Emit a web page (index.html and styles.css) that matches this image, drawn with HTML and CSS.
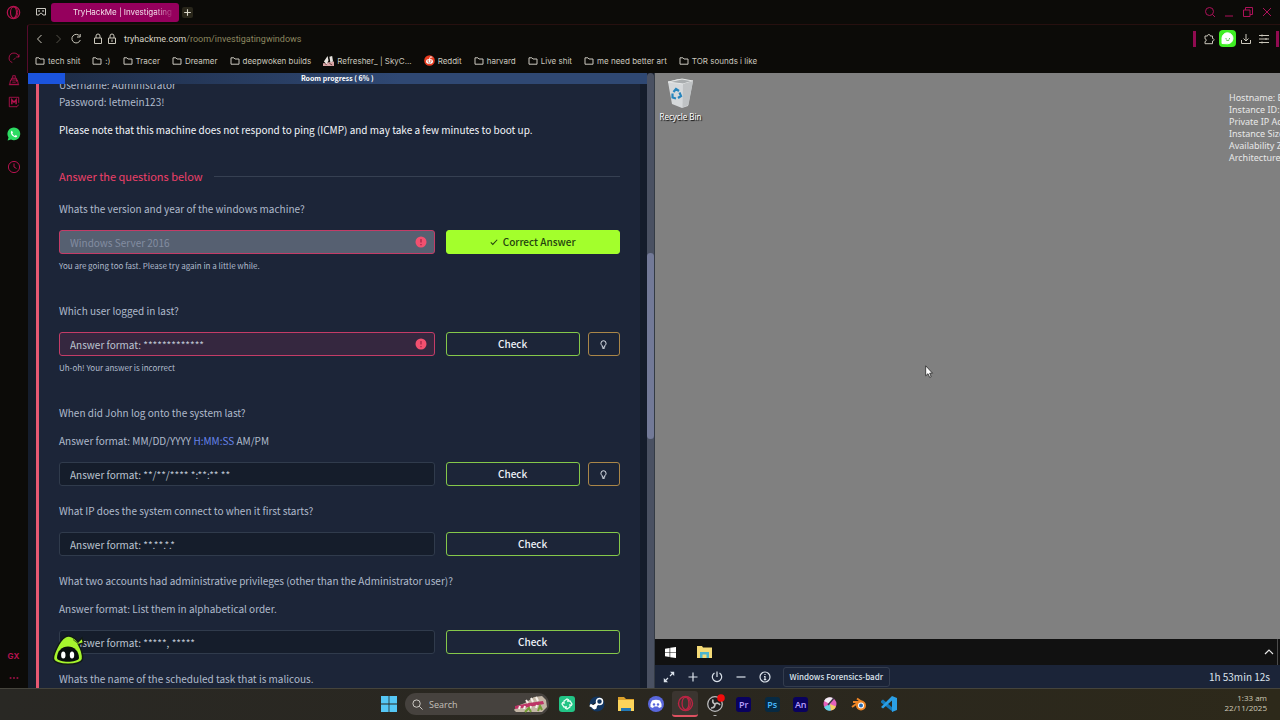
FILE: index.html
```
<!DOCTYPE html>
<html lang="en">
<head>
<meta charset="utf-8">
<title>TryHackMe | Investigating Windows</title>
<link rel="stylesheet" href="styles.css">
</head>
<body>
<svg class="defs" aria-hidden="true">
  <symbol id="folder" viewBox="0 0 10 10"><path d="M1 8.2V1.8h2.9L5 3h4v5.2z" fill="none" stroke="currentColor" stroke-linejoin="round"/></symbol>
  <symbol id="opera" viewBox="0 0 16 16"><circle cx="8" cy="8" r="6.6" fill="none" stroke="currentColor" stroke-width="1.3"/><ellipse cx="8" cy="8" rx="3.2" ry="5.8" fill="none" stroke="currentColor" stroke-width="1.2"/><path d="M9.5 2.3c4 2 4 9.400 0 11.400" fill="none" stroke="currentColor"/></symbol>
  <symbol id="alert" viewBox="0 0 12 12"><circle cx="6" cy="6" r="5.500" fill="#f2506f"/><path d="M6 3v3.600M6 8v1.200" stroke="#a32447" stroke-width="1.300"/></symbol>
  <symbol id="bulb" viewBox="0 0 12 12"><path d="M4.700 9V7.500C3.800 6.700 3.200 5.900 3.200 4.700a2.800 2.800 0 0 1 5.600 0c0 1.200-.6 2-1.500 2.800V9zM4.800 10.200h2.400" fill="none" stroke="currentColor"/></symbol>
</svg>
<div class="screen">
  <div class="browser">
    <nav class="side" aria-label="Browser sidebar">
      <svg class="s-opera" viewBox="0 0 16 16"><use href="#opera"/></svg>
      <div class="side-group">
        <svg viewBox="0 0 14 14"><path d="M5 12.300A5.700 5.700 0 1 1 12.600 6M9.500 5.800h3.300V2.700M6.500 9.200 9 6.600"/></svg>
        <svg viewBox="0 0 14 14"><path d="M4 7V5h6v4M5.500 5V2h3v3M3 7h8l1 5H2l1-5zM1 12.500h12M5 9.500h4"/></svg>
        <svg viewBox="0 0 14 14"><path d="M12.500 8V1.500h-11v11h9M10 12.500l2.500-2"/><path d="M4.500 9.500v-5L7 7.300l2.500-2.800v5" stroke-width="1.700"/></svg>
      </div>
      <svg class="s-whats" viewBox="0 0 14 14"><path d="M.6 13.400 1.500 10.400A6.400 6.400 0 1 1 4 12.600z" fill="#2ddc63"/><path d="M4.900 3.800 6 5.600l-.7 1C6 7.900 6.700 8.500 7.700 9l1-.9 1.600 1c-.4 1.400-1.600 1.500-2.700 1C5.600 9.300 4.300 7.700 3.900 6c-.1-1 .3-1.900 1-2.200z" fill="#fff"/></svg>
      <svg class="s-clock" viewBox="0 0 14 14"><circle cx="7" cy="7" r="5.600"/><path d="M7 3.500V7l2.500 1.500"/></svg>
      <div class="side-end"><span>GX</span><svg viewBox="0 0 14 6"><path d="M2 3h2M6 3h2M10 3h2" stroke-width="2"/></svg></div>
    </nav>
    <div class="window">
      <header class="tabs">
        <svg class="gamepad" viewBox="0 0 12 10"><path d="M1.500 1.500h9v6.500H8L6.800 6.300H5.200L4 8H1.500z" fill="none" stroke="currentColor"/><path d="M3.300 4h1.500M7.300 4h1.500" stroke="currentColor" stroke-width="1.300"/></svg>
        <button class="tab"><span>TryHackMe | Investigating</span></button>
        <button class="plus" aria-label="New tab"><svg viewBox="0 0 10 10"><path d="M5 2v6M2 5h6" stroke="currentColor"/></svg></button>
        <div class="wincontrols">
          <button aria-label="Search tabs"><svg viewBox="0 0 12 12"><circle cx="5.500" cy="5.500" r="4"/><path d="m8.500 8.500 2.500 2.500"/></svg></button>
          <button aria-label="Minimise"><svg viewBox="0 0 12 12"><path d="M2 10h8"/></svg></button>
          <button aria-label="Restore"><svg viewBox="0 0 12 12"><path d="M1.500 4h6.500v6.500H1.500zM3.500 4V1.500h7V8.500H8"/></svg></button>
          <button aria-label="Close"><svg viewBox="0 0 12 12"><path d="m2 2 8 8M10 2l-8 8"/></svg></button>
        </div>
      </header>
      <div class="chrome">
        <div class="address">
          <svg viewBox="0 0 12 12"><path d="M7.500 2 3.500 6l4 4"/></svg>
          <svg class="dim" viewBox="0 0 12 12"><path d="m4.500 2 4 4-4 4"/></svg>
          <svg viewBox="0 0 12 12"><path d="M9.600 3A4.300 4.300 0 1 0 10.300 7M10.200 1v3H7"/></svg>
          <svg class="lock" viewBox="0 0 12 12"><path d="M2.500 5h7v5.500h-7zM4 5V3a2 2 0 0 1 4 0v2"/></svg>
          <svg viewBox="0 0 12 12"><path d="M2.500 5h7v5.500h-7zM4 5V3a2 2 0 0 1 4 0v2M6 6.500v2.500"/></svg>
          <span class="url">tryhackme.com<em>/room/investigatingwindows</em></span>
          <div class="tools">
            <i></i>
            <svg viewBox="0 0 12 12"><path d="M2 3h2.500c-.3-2 3-2 2.700 0H9.500v2.500c2-.2 2 2.700 0 2.500v2.700H2V8.500c1.700 0 1.700-2.700 0-2.700z"/></svg>
            <svg class="chat" viewBox="0 0 17 17"><rect width="17" height="17" rx="4" fill="#3fee23" stroke="none"/><path d="M3 13.500V8a5.500 5.500 0 1 1 5.500 5.800z" fill="#fff" stroke="#fff"/><path d="M7 8.200v1M10.500 8.200v1M7.200 10q1.500 1 3 0" stroke="#3fb92f"/></svg>
            <svg viewBox="0 0 12 12"><path d="M6 1v7M3.500 5.500 6 8l2.500-2.500M1.500 7v3.500h9V7"/></svg>
            <svg class="menu" viewBox="0 0 12 12"><path d="M1 2.500h10M1 6h10M1 9.500h10M4 1.500v2M8 5v2M4 8.500v2"/></svg>
            <i></i>
          </div>
        </div>
        <nav class="bookmarks">
          <a href="#"><svg><use href="#folder"/></svg>tech shit</a>
          <a href="#"><svg><use href="#folder"/></svg>:)</a>
          <a href="#"><svg><use href="#folder"/></svg>Tracer</a>
          <a href="#"><svg><use href="#folder"/></svg>Dreamer</a>
          <a href="#"><svg><use href="#folder"/></svg>deepwoken builds</a>
          <a href="#"><svg class="fav" viewBox="0 0 12 12"><path d="M0 9 12 7v5H0z" fill="#d9a6a6"/><path d="m1 7 4-6 1 5-2 4zM7 2l3-1 1 6-3 1z" fill="#e8e4df"/><path d="m2 9 2 2M7 9l3 2" stroke="#5c3436"/></svg>Refresher_ | SkyC...</a>
          <a href="#"><svg class="fav" viewBox="0 0 12 12"><circle cx="6" cy="6" r="5.800" fill="#e93c20"/><ellipse cx="6" cy="7" rx="3.800" ry="2.700" fill="#fff"/><path d="M6 4.300 7 2l2 .5" stroke="#fff" fill="none"/><circle cx="4.500" cy="6.500" r=".8" fill="#e93c20"/><circle cx="7.500" cy="6.500" r=".8" fill="#e93c20"/><path d="M4.500 8.300q1.500 1 3 0" stroke="#59211a" fill="none" stroke-width=".6"/></svg>Reddit</a>
          <a href="#"><svg><use href="#folder"/></svg>harvard</a>
          <a href="#"><svg><use href="#folder"/></svg>Live shit</a>
          <a href="#"><svg><use href="#folder"/></svg>me need better art</a>
          <a href="#"><svg><use href="#folder"/></svg>TOR sounds i like</a>
        </nav>
      </div>
      <main class="split">
        <section class="room">
          <div class="scroller">
            <article class="task">
              <p class="creds">Username: Administrator<br>Password: letmein123!</p>
              <p class="note">Please note that this machine does not respond to ping (ICMP) and may take a few minutes to boot up.</p>
              <h2>Answer the questions below</h2>
              <form>
                <div class="question">
                  <label for="q1">Whats the version and year of the windows machine?</label>
                  <div class="answer">
                    <div class="field"><input id="q1" class="error" value="Windows Server 2016" disabled><svg><use href="#alert"/></svg></div>
                    <div class="actions"><button type="button" class="correct"><svg viewBox="0 0 10 10"><path d="m1 5.500 2.500 2.500L9 2.200" fill="none" stroke="currentColor" stroke-width="1.300"/></svg>Correct Answer</button></div>
                  </div>
                  <small>You are going too fast. Please try again in a little while.</small>
                </div>
                <div class="question">
                  <label for="q2">Which user logged in last?</label>
                  <div class="answer">
                    <div class="field"><input id="q2" class="error" placeholder="Answer format: *************"><svg><use href="#alert"/></svg></div>
                    <div class="actions"><button type="button">Check</button><button type="button" class="hint" aria-label="Hint"><svg><use href="#bulb"/></svg></button></div>
                  </div>
                  <small>Uh-oh! Your answer is incorrect</small>
                </div>
                <div class="question">
                  <label for="q3">When did John log onto the system last?</label>
                  <p>Answer format: MM/DD/YYYY <b>H:MM:SS</b> AM/PM</p>
                  <div class="answer">
                    <div class="field"><input id="q3" placeholder="Answer format: **/**/**** *:**:** **"></div>
                    <div class="actions"><button type="button">Check</button><button type="button" class="hint" aria-label="Hint"><svg><use href="#bulb"/></svg></button></div>
                  </div>
                </div>
                <div class="question">
                  <label for="q4">What IP does the system connect to when it first starts?</label>
                  <div class="answer">
                    <div class="field"><input id="q4" placeholder="Answer format: **.**.*.*"></div>
                    <div class="actions"><button type="button">Check</button></div>
                  </div>
                </div>
                <div class="question">
                  <label for="q5">What two accounts had administrative privileges (other than the Administrator user)?</label>
                  <p>Answer format: List them in alphabetical order.</p>
                  <div class="answer">
                    <div class="field"><input id="q5" placeholder="Answer format: *****, *****"></div>
                    <div class="actions"><button type="button">Check</button></div>
                  </div>
                </div>
                <div class="question"><p>Whats the name of the scheduled task that is malicous.</p></div>
              </form>
            </article>
          </div>
          <div class="progress"><i style="width:6%"></i><strong>Room progress ( 6% )</strong></div>
          <div class="scrollbar"><i></i></div>
          <svg class="mascot" viewBox="0 0 32 30"><path d="M1.500 24C1 20 7 6 13 2.200 17-.5 23 2 26 7l4-4 1 3 .5 2-5 1.500C29 14 31 20 30.500 24 29 31 3 31 1.500 24z" fill="#a6f52d" stroke="#121b16" stroke-width="1.500"/><path d="M21 4.500 26.500 9" stroke="#48721d"/><path d="M5 23c0-7 5-11.500 11-11.500S27 16 27 23c-1 5-21 5-22 0z" fill="#080d0c"/><ellipse cx="11.300" cy="20" rx="2.200" ry="3.500" fill="#fff"/><ellipse cx="20" cy="20" rx="2.200" ry="3.500" fill="#fff"/></svg>
        </section>
        <section class="remote">
          <div class="vmdesk">
            <div class="bin">
              <svg viewBox="0 0 28 30"><path d="m1 4 10-3 15 2-5 25-6 2-10-4z" fill="#d5d8da"/><path d="m1 4 15 2 10-3-11-2z" fill="#a9adaf" stroke="#e5e7e7"/><path d="m16 6 10-3-4.500 24-6 2.500z" fill="#bfc2c4"/><path d="m6.500 14 2.500-3 3 2M12.500 14.500l1.500 3.500-3 2M9 20.500l-3.500-1V15.500" fill="none" stroke="#2785bd" stroke-width="2.200"/></svg>
              <span>Recycle Bin</span>
            </div>
            <div class="instance">Hostname: E<br>Instance ID:<br>Private IP Ac<br>Instance Size<br>Availability Z<br>Architecture</div>
            <svg class="cursor" viewBox="0 0 8 13"><path d="M.7.800v10L3 8.700 4.700 12.400l1.500-.7-1.500-3.500h2.800z" fill="#fff" stroke="#222" stroke-width=".8"/></svg>
          </div>
          <div class="vmbar">
            <svg viewBox="0 0 12 12"><path d="m0 1.800 5-.8v4.700H0zM5.700.900 12 0v5.700H5.700zM0 6.400h5V11l-5-.8zM5.700 6.400H12V12l-6.300-.9z" fill="#fff"/></svg>
            <svg class="vmfolder" viewBox="0 0 15 12"><path d="M0 0h5l1 1.500h9V12H0z" fill="#f4da77"/><path d="M3 12V6h9v6H9.500V8.500h-4V12z" fill="#4db5cf"/></svg>
            <svg class="chev" viewBox="0 0 10 10"><path d="m1 7 4-4 4 4" fill="none" stroke="#e8e8e8" stroke-width="1.200"/></svg>
            <i></i>
          </div>
          <div class="controls">
            <button aria-label="Expand"><svg viewBox="0 0 12 12"><path d="M7 5 10 2M5 7l-3 3"/><path d="M7 .8h4.200V5zM.8 7v4.200H5z" fill="currentColor" stroke="none"/></svg></button>
            <button aria-label="Add time"><svg viewBox="0 0 12 12"><path d="M6 1.500v9M1.500 6h9"/></svg></button>
            <button aria-label="Terminate"><svg viewBox="0 0 12 12"><path d="M6 .5V6M3.500 1.900a4.700 4.700 0 1 0 5 0"/></svg></button>
            <button aria-label="Hide"><svg viewBox="0 0 12 12"><path d="M1.500 6h9"/></svg></button>
            <button aria-label="Information"><svg viewBox="0 0 12 12"><circle cx="6" cy="6" r="5"/><path d="M6 3v1M5 5.500h1v3M4.800 8.700h2.500"/></svg></button>
            <span class="machine">Windows Forensics-badr</span>
            <time>1h 53min 12s</time>
          </div>
        </section>
      </main>
    </div>
  </div>
  <footer class="taskbar">
    <div class="dock">
      <svg class="start" viewBox="0 0 16 16"><path d="M0 0h7.600v7.600H0zM8.400 0H16v7.600H8.400zM0 8.400h7.600V16H0zM8.400 8.400H16V16H8.400z" fill="#55c7f5"/></svg>
      <label class="search"><svg viewBox="0 0 12 12"><circle cx="5" cy="5" r="4"/><path d="m8 8 3.500 3.500"/></svg><input placeholder="Search" aria-label="Search"><svg class="croc" viewBox="0 0 34 18"><path d="M1 15 4 11l8-3 9-6 8-1 4 4 1 7-5 5H3z" fill="#c3b6a5"/><path d="m2 11 14-3 14-2 1 3-15 3-14 2z" fill="#bd3467"/><path d="m13 5 2 3M18 3l2 4M23 2l2 4M6 14l1-3M11 14l1-3M17 14l1-3M23 13l1-3" stroke="#f6f1ea" stroke-width="2"/><path d="m12 17 4-4 2 4M25 16l2-5 2 4" stroke="#729b35" stroke-width="2" fill="none"/></svg></label>
      <div class="apps">
        <svg viewBox="0 0 20 20"><rect x="2" y="2" width="16" height="16" rx="3" fill="#22c486"/><path d="M7 10V7l3-2 2 1M10 7h3l2 3-1 2M13 10v3l-3 2-2-1M10 13H7l-2-3 1-2" fill="none" stroke="#eafff5" stroke-width="1.300"/></svg>
        <svg viewBox="0 0 20 20"><circle cx="10" cy="10" r="7.500" fill="#12355f"/><path d="m3 11 4 2 5-5" stroke="#fff" stroke-width="3"/><circle cx="12.500" cy="7.500" r="3" fill="#12355f" stroke="#fff" stroke-width="1.500"/><circle cx="7.500" cy="13" r="2.400" fill="#fff"/></svg>
        <svg viewBox="0 0 20 20"><path d="M2 3h6l2 2h8v12H2z" fill="#dca12b"/><path d="M2 6h16v11H2z" fill="#fbd45b"/><path d="M5 17v-3h10v3z" fill="#2178b5"/></svg>
        <svg viewBox="0 0 20 20"><circle cx="10" cy="10" r="8" fill="#5967dc"/><path d="M6 6.500q4-1.500 8 0 2 3 1.500 6.500L13 14l-1-1.500H8L7 14l-2.500-1Q4 9.500 6 6.500z" fill="#fff"/><circle cx="8" cy="10.500" r="1.200" fill="#5967dc"/><circle cx="12" cy="10.500" r="1.200" fill="#5967dc"/></svg>
        <span class="active"><svg viewBox="0 0 16 16"><use href="#opera"/></svg></span>
        <svg viewBox="0 0 20 20"><circle cx="10" cy="10" r="7.300" fill="#201f20" stroke="#bbb" stroke-width="1.300"/><path d="M10 10q-3-1-2-4.500M10 10q3-2 5 1M10 10q0 4-4 4" fill="none" stroke="#bbb" stroke-width="1.700"/><circle cx="16" cy="4" r="3.800" fill="#f30c0c"/><path d="M8.500 21.500h3" stroke="#aaa"/></svg>
        <span class="adobe pr">Pr</span>
        <span class="adobe ps">Ps</span>
        <span class="adobe an">An</span>
        <svg viewBox="0 0 20 20"><circle cx="10" cy="10" r="6.500" fill="#e561bc"/><path d="M10 10 4 7a6.500 6.500 0 0 1 9-3z" fill="#f3edf6"/><path d="M10 10 4 13a6.500 6.500 0 0 0 7 3.500z" fill="#63d6e9"/><path d="m10 10 1 6.500a6.500 6.500 0 0 0 5-4z" fill="#f3cf64"/><path d="m8 11 6-7" stroke="#3c3548" stroke-width="1.500"/></svg>
        <svg viewBox="0 0 20 20"><path d="m3 13 7-5H4M8 4.500l7 5" fill="none" stroke="#ee8526" stroke-width="2"/><circle cx="12" cy="11.500" r="4" fill="#fff" stroke="#ee8526" stroke-width="2"/><circle cx="12" cy="11.500" r="2" fill="#2a69ad"/></svg>
        <svg viewBox="0 0 20 20"><path d="m2 7 2-1.500L14 14v4L2 8.500z" fill="#1478b9"/><path d="M2 13 13 2l5 2v12l-5 2V6.500L4 14.500z" fill="#2b9fe5"/></svg>
      </div>
    </div>
    <div class="clock">1:33 am<br>22/11/2025</div>
  </footer>
</div>
</body>
</html>
```
FILE: styles.css
```
* { box-sizing: border-box; }
body { margin: 0; background: #0c0b08; font-family: Inter, sans-serif; }
svg { display: block; flex: none; overflow: visible; }
button { margin: 0; padding: 0; border: 0; background: none; color: inherit; font: inherit; }
p, h2 { margin: 0; }
.defs { position: absolute; width: 0; height: 0; }
.screen { display: flex; flex-direction: column; height: 100vh; overflow: hidden; }
.browser { flex: 1; min-height: 0; display: flex; }

.side { width: 27px; display: flex; flex-direction: column; align-items: center; color: #b5124f; padding-top: 5px; }
.side svg { width: 12px; height: 12px; fill: none; stroke: currentColor; }
.side .s-opera { width: 15px; height: 15px; }
.side-group { display: grid; gap: 10px; margin-top: 32px; }
.side .s-whats { width: 14px; height: 14px; margin-top: 19px; stroke: none; }
.side .s-clock { width: 14px; height: 14px; margin-top: 19px; }
.side-end { margin-top: auto; display: grid; justify-items: center; gap: 13px; padding-bottom: 7px; font-size: 8px; font-weight: 700; line-height: 12px; }
.side-end svg { height: 6px; }

.window { flex: 1; min-width: 0; display: flex; flex-direction: column; }
.tabs { height: 24px; display: flex; align-items: center; padding: 0 7px 0 8px; }
.gamepad { width: 12px; height: 10px; color: #c9c7c0; }
.tab { width: 128px; height: 19px; margin-left: 4px; padding: 0 4px 0 22px; border-radius: 3px; background: #95005d; color: #f3dfea; font-size: 8px; text-align: left; }
.tab span { display: block; white-space: nowrap; mask-image: linear-gradient(90deg, #000 80%, transparent); }
.plus { width: 11px; height: 11px; margin-left: 3px; border-radius: 2px; background: #29261a; color: #dcd9cc; }
.plus svg { width: 11px; height: 11px; }
.wincontrols { display: flex; gap: 7px; margin-left: auto; color: #ad1159; }
.wincontrols svg { width: 12px; height: 12px; fill: none; stroke: currentColor; }

.chrome { border-left: 1px solid #560b2c; border-top: 1px solid #27100f; border-top-left-radius: 3px; height: 49px; }
.address { display: flex; align-items: center; height: 27px; padding: 0 1px 0 6px; gap: 6px; color: #cac7bb; }
.address svg { width: 12px; height: 12px; fill: none; stroke: currentColor; }
.address .dim { color: #55524a; }
.address .lock { margin-left: 4px; margin-right: -4px; }
.url { font: 9px Roboto, sans-serif; color: #d7d4c5; }
.url em { color: #8d8861; font-style: normal; }
.tools { display: flex; align-items: center; gap: 4px; margin-left: auto; }
.tools i { width: 3px; height: 16px; background: #910b51; }
.tools i:first-child { margin-right: 3px; }
.tools .chat { width: 17px; height: 17px; }
.tools .menu { margin: 0 2px; }
.bookmarks { display: flex; gap: 12px; height: 17px; padding-left: 7px; align-items: center; white-space: nowrap; }
.bookmarks a { display: flex; align-items: center; gap: 3px; color: #cbc8bf; font-size: 8px; line-height: 16px; text-decoration: none; }
.bookmarks svg { width: 10px; height: 10px; }
.bookmarks .fav { width: 11px; height: 11px; }

.split { flex: 1; min-height: 0; display: flex; font-family: "Noto Sans CJK SC", sans-serif; margin-left: 1px; }
.room { flex: 1; min-width: 0; position: relative; display: flex; background: #151d2c; }
.scroller { flex: 1; min-width: 0; overflow: hidden; padding: 0 7px 0 8px; }
.task { border-left: 3px solid #e75872; background: #1c2538; padding: 3px 20px 0 20px; min-height: 100%; color: #b0bbcc; font-size: 10px; }
.creds { line-height: 17px; }
.note { margin-top: 11px; line-height: 17px; color: #f3f6fa; }
.task h2 { display: flex; align-items: center; gap: 11px; margin: 28px 0 14px; color: #ed4069; font-size: 11px; font-weight: 400; line-height: 20px; }
.task h2::after { content: ""; flex: 1; height: 1px; background: #364052; }
.question { display: flex; flex-direction: column; margin-bottom: 16px; line-height: 18px; }
.question p { margin-top: 10px; }
.question > p:first-child { margin-top: 0; }
.question b { font-weight: 400; color: #6684eb; }
.answer { display: grid; grid-template-columns: minmax(0, 1fr) 31%; gap: 11px; margin-top: 12px; }
.field { position: relative; }
.field input { display: block; width: 100%; height: 24px; padding: 0 10px; border: 1px solid #303b4c; border-radius: 3px; background: #151d2b; color: #b0bbcc; font: inherit; outline: 0; }
.field input::placeholder { color: #bdc5d1; opacity: 1; }
.field .error { border-color: #c43c67; background: #35273f; }
.field input:disabled { background: #566071; color: #838da1; }
.field svg { position: absolute; right: 8px; top: 6px; width: 12px; height: 12px; }
.actions { display: flex; gap: 8px; }
.actions button { flex: 1; height: 24px; border: 1px solid #85c84a; border-radius: 3px; color: #eef2f8; font-weight: 500; font-size: 10px; display: flex; align-items: center; justify-content: center; }
.actions .correct { border-color: #a3ff2c; background: #a3ff2c; color: #24430f; gap: 5px; }
.correct svg { width: 8px; height: 8px; }
.actions .hint { flex: 0 0 32px; border-color: #aa8648; }
.hint svg { width: 11px; height: 11px; }
.question small { margin: 4px 0 12px; font-size: 8px; line-height: 16px; color: #b0bbcc; }
.progress { position: absolute; inset: 0 7px auto 0; height: 11px; background: linear-gradient(90deg, #1c2a43, #2f4873 60%); text-align: center; }
.progress i { position: absolute; left: 0; top: 0; height: 11px; background: #1b54dd; }
.progress strong { position: relative; display: block; color: #fff; font-size: 7px; font-weight: 700; line-height: 11px; }
.scrollbar { width: 7px; padding-top: 180px; background: #4a5162; border-radius: 4px 4px 0 0; }
.scrollbar i { display: block; height: 186px; background: #737a98; border-radius: 4px; }
.mascot { position: absolute; left: 24px; bottom: 23px; width: 32px; height: 30px; }

.remote { flex: 1; min-width: 0; display: flex; flex-direction: column; border-left: 1px solid #343b45; }
.vmdesk { position: relative; flex: 1; overflow: hidden; background: #808080; }
.bin { position: absolute; left: 2px; top: 5px; width: 48px; display: grid; justify-items: center; gap: 3px; color: #fff; font: 8px/12px "Noto Sans", sans-serif; text-shadow: 1px 1px 1px #000; white-space: nowrap; }
.bin svg { width: 28px; height: 30px; }
.instance { position: absolute; left: calc(100% - 51px); top: 19px; color: #e8e8e8; font: 9px/12px "Noto Sans", sans-serif; white-space: nowrap; }
.cursor { position: absolute; left: 270px; top: 292px; width: 8px; height: 13px; }
.vmbar { height: 26px; display: flex; align-items: center; padding-left: 10px; background: #111; }
.vmbar svg { width: 11px; height: 11px; }
.vmbar .vmfolder { width: 15px; height: 12px; margin-left: 21px; }
.vmbar .chev { width: 10px; height: 10px; margin-left: auto; margin-right: 3px; }
.vmbar i { width: 3px; height: 26px; border-left: 1px solid #4c4c4c; }
.controls { height: 23px; display: flex; align-items: center; gap: 12px; padding: 0 10px 0 8px; background: #1b2438; color: #dce3ec; }
.controls svg { width: 12px; height: 12px; fill: none; stroke: currentColor; stroke-width: 1.200; }
.machine { height: 20px; padding: 0 6px; border: 1px solid #333c4e; border-radius: 3px; font-size: 8px; line-height: 18px; font-weight: 500; white-space: nowrap; }
.controls time { margin-left: auto; font-size: 10px; }

.taskbar { position: relative; height: 32px; display: flex; align-items: center; justify-content: center; padding-bottom: 1px; border-top: 1px solid #45443c; background: linear-gradient(90deg, #292824, #2a271f 55%, #2d291a); }
.dock { display: flex; align-items: center; gap: 8px; }
.start { width: 16px; height: 16px; }
.search { width: 144px; height: 22px; display: flex; align-items: center; gap: 6px; padding: 0 2px 0 7px; border-radius: 11px; background: #46423e; color: #d8d5d0; }
.search svg { width: 11px; height: 11px; fill: none; stroke: currentColor; }
.search input { flex: 1; min-width: 0; padding: 0; border: 0; background: none; color: inherit; font: 9px "Open Sans", sans-serif; outline: 0; }
.search input::placeholder { color: #c4c0ba; opacity: 1; }
.search .croc { width: 34px; height: 18px; stroke: none; }
.apps { width: 342px; display: flex; justify-content: space-between; align-items: center; }
.apps > * { width: 20px; height: 20px; }
.apps > .active { display: grid; place-items: center; width: 26px; height: 26px; margin: 0 -3px; border-radius: 3px; background: #3b3530; border-bottom: 2px solid #df5161; color: #bd2444; }
.active svg { width: 17px; height: 17px; }
.apps > .adobe { width: 15px; height: 15px; margin: 0 2px; border-radius: 3px; text-align: center; font: 600 9px/15px "Open Sans", sans-serif; }
.pr, .an { background: #09015e; color: #b8a0ff; }
.ps { background: #072a43; color: #48b9ff; }
.clock { position: absolute; right: 13px; top: 4px; color: #cfcab9; font: 8px/10px "Open Sans", sans-serif; text-align: right; }
```
